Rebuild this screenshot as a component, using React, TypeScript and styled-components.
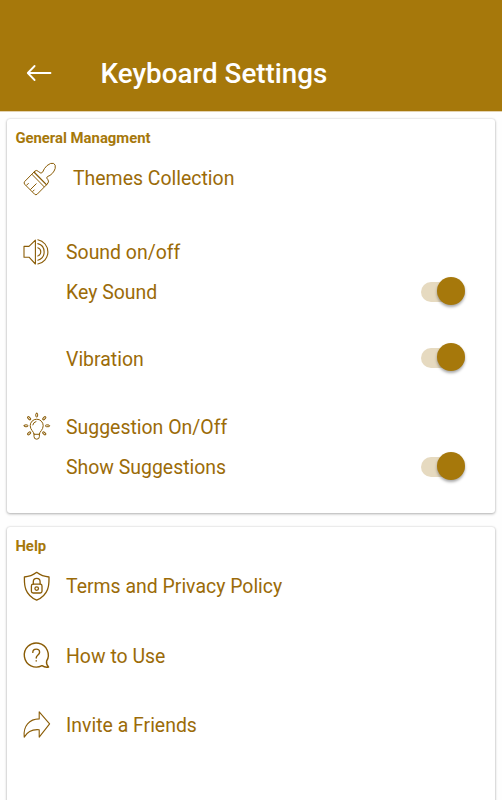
import React, { useState } from "react";
import styled, { createGlobalStyle } from "styled-components";

const gold = "#a6780b";
const ink = "#8a5c06";

const GlobalStyle = createGlobalStyle`
  * { box-sizing: border-box; }
  html, body { margin: 0; background: #fff; }
  body { font-family: Roboto, "Liberation Sans", sans-serif; overflow: hidden; }
`;

const Screen = styled.main`
  display: flex;
  flex-direction: column;
  width: 502px;
  height: 800px;
  overflow: hidden;
  background: #fefefe;
`;

const Header = styled.header`
  display: flex;
  align-items: center;
  flex: none;
  height: 111px;
  padding: 36px 0 0 26px;
  background: ${gold};
  box-shadow: 0 1px 0 #e3d2b0;
`;

const BackButton = styled.button`
  display: flex;
  width: 26px;
  height: 20px;
  margin: -2px 48.5px 0 0;
  padding: 0;
  border: 0;
  background: none;
`;

const Title = styled.h1`
  margin: 0;
  color: #fff;
  font-size: 27.8px;
  font-weight: 500;
  line-height: 36px;
  white-space: nowrap;
`;

const Content = styled.div`
  display: flex;
  flex-direction: column;
  gap: 14px;
  padding: 8px 7px 0;
`;

const Card = styled.section<{ $height: number }>`
  flex: none;
  height: ${(p) => p.$height}px;
  padding: 9px 9px 0 8px;
  border-radius: 3px;
  background: #fff;
  box-shadow: 0 1px 3px rgba(0, 0, 0, 0.28), 0 0 2px rgba(0, 0, 0, 0.16);
`;

const SectionTitle = styled.h2`
  height: 20px;
  margin: 0;
  padding-left: 0.4px;
  color: ${gold};
  font-size: 14.85px;
  font-weight: 700;
  line-height: 20px;
`;

const Row = styled.div<{ $gap?: number; $indent?: number }>`
  display: grid;
  grid-template-columns: ${(p) => p.$indent ?? 51}px 1fr auto;
  align-items: center;
  height: 40px;
  margin-top: ${(p) => p.$gap ?? 0}px;
  padding-right: 21px;
`;

const Label = styled.span<{ $drop?: number }>`
  grid-column: 2;
  padding-top: ${(p) => (p.$drop ?? 1) * 2}px;
  color: #9b6b08;
  font-size: 19.45px;
  line-height: 24px;
  white-space: nowrap;
`;

const Icon = styled.svg<{ $weight?: number }>`
  width: 41px;
  height: 40px;
  margin-left: 0.5px;
  fill: none;
  stroke: ${ink};
  stroke-width: ${(p) => p.$weight ?? 1.1};
  stroke-linecap: round;
  stroke-linejoin: round;
  overflow: visible;
`;

const Track = styled.button<{ $on: boolean }>`
  display: flex;
  align-items: center;
  justify-content: ${(p) => (p.$on ? "flex-end" : "flex-start")};
  width: 44.5px;
  height: 20px;
  margin-top: -1px;
  padding: 0;
  border: 0;
  border-radius: 10px;
  background: ${(p) => (p.$on ? "#e6dac0" : "#ccc")};
`;

const Thumb = styled.span`
  flex: none;
  width: 28px;
  height: 28px;
  margin-top: -1px;
  border-radius: 50%;
  background: ${gold};
  box-shadow: 0 2px 3px rgba(0, 0, 0, 0.35);
`;

function Toggle({ label }: { label: string }) {
  const [on, setOn] = useState(true);
  return (
    <Track $on={on} role="switch" aria-checked={on} aria-label={label} onClick={() => setOn(!on)}>
      <Thumb />
    </Track>
  );
}

const BrushIcon = () => (
  <Icon viewBox="0 -1 41 40" $weight={1}>
    <path d="M19 12 8.6 22.6Q7.6 24 8.6 25.2L18.6 35.2Q20 36.4 21.2 35.2L31.3 25" />
    <path d="M31.3 25Q33.6 22.8 32 20.8Q29.6 18.8 31.4 17.6C35 16.6 38.2 13 39.2 9.4Q40 5.6 37.6 4.4Q34.8 3.4 31 6.6Q28 9.4 26.6 13.2Q25.2 15.4 22.8 12.8Q20.8 10.4 19 12" />
    <path strokeWidth="1.3" d="m18.2 13.2 12.2 12.4" />
    <path d="m16 15.4 12.2 12.4M10.6 26.2l1.8-1.8M14.6 30.4l5.6-5.6M16.8 32.4l1.4-1.4" />
  </Icon>
);

const SoundIcon = () => (
  <Icon viewBox="0 0 41 40">
    <path d="M8 14.4h5l6.4-6.2v23.8L13 25.2H8Z" />
    <path d="M21.8 7.8A12.3 12.3 0 0 1 21.8 32M21.8 11.6A8.6 8.6 0 0 1 21.8 28.2M21.8 15.8A4.3 4.3 0 0 1 21.8 24" />
  </Icon>
);

const BulbIcon = () => (
  <Icon viewBox="0 -0.5 41 40" $weight={1}>
    <path d="M18 26.4C18 24.2 14.2 22.4 14.2 18.2a6.5 6.5 0 0 1 13 0C27.2 22.4 23.4 24.2 23.4 26.4ZM18 26.4v2.6q0 2.7 2.7 2.7t2.7-2.7v-2.6M16.8 17.4q.5-2.7 3.2-3.4" />
    {[0, 45, 90, 135, 225, 270, 315].map((a) => (
      <rect key={a} x="19.8" y="5.7" width="1.8" height="3.8" rx=".9" transform={`rotate(${a} 20.7 18.3)`} />
    ))}
  </Icon>
);

const ShieldIcon = () => (
  <Icon viewBox="0 0 41 40" $weight={1.3}>
    <path d="M20.7 6.3C17.2 9 12.8 10.7 8.4 11C8.4 17.2 7.5 28.4 20.7 34.2C33.9 28.4 33 17.2 33 11C28.6 10.7 24.2 9 20.7 6.3Z" />
    <rect x="15.4" y="18.2" width="10.6" height="8.8" rx="1.8" />
    <path d="M17.3 18v-2.2a3.4 3.4 0 0 1 6.8 0V18" />
    <circle cx="20.7" cy="22.6" r="1.8" />
  </Icon>
);

const QuestionIcon = () => (
  <Icon viewBox="0 0 41 40" $weight={1.4}>
    <path d="M26 29.6A12 12 0 1 1 30.6 25.2Q30 28.8 32.6 31Q29 31.8 26 29.6Z" />
    <path d="M16.8 16.4c0-4.4 6.8-4.2 6.8-.2 0 2.8-3.4 2.8-3.4 5.8M20.2 24.8v.3" />
  </Icon>
);

const ShareIcon = () => (
  <Icon viewBox="0 -0.5 41 40">
    <path d="M23.2 7.4 33.6 19.4 23.2 32.6V25.2C17 24.6 11.6 26.8 8.2 32.6C7 21.2 13.4 14.6 23.2 14.4Z" />
  </Icon>
);

export default function App() {
  return (
    <>
      <GlobalStyle />
      <Screen>
        <Header>
          <BackButton aria-label="Back">
            <svg width="26" height="20" fill="none" stroke="#fff" strokeWidth="1.8" strokeLinecap="round" strokeLinejoin="round">
              <path d="M24.5 10H2M8.6 3 1.8 10l6.8 7" />
            </svg>
          </BackButton>
          <Title>Keyboard Settings</Title>
        </Header>
        <Content>
          <Card $height={394}>
            <SectionTitle>General Managment</SectionTitle>
            <Row $gap={10} $indent={58}>
              <BrushIcon />
              <Label>Themes Collection</Label>
            </Row>
            <Row $gap={34}>
              <SoundIcon />
              <Label>Sound on/off</Label>
            </Row>
            <Row>
              <Label>Key Sound</Label>
              <Toggle label="Key Sound" />
            </Row>
            <Row $gap={26}>
              <Label $drop={2}>Vibration</Label>
              <Toggle label="Vibration" />
            </Row>
            <Row $gap={29}>
              <BulbIcon />
              <Label>Suggestion On/Off</Label>
            </Row>
            <Row>
              <Label>Show Suggestions</Label>
              <Toggle label="Show Suggestions" />
            </Row>
          </Card>
          <Card $height={300}>
            <SectionTitle>Help</SectionTitle>
            <Row $gap={10}>
              <ShieldIcon />
              <Label>Terms and Privacy Policy</Label>
            </Row>
            <Row $gap={30}>
              <QuestionIcon />
              <Label>How to Use</Label>
            </Row>
            <Row $gap={28}>
              <ShareIcon />
              <Label $drop={2}>Invite a Friends</Label>
            </Row>
          </Card>
        </Content>
      </Screen>
    </>
  );
}
